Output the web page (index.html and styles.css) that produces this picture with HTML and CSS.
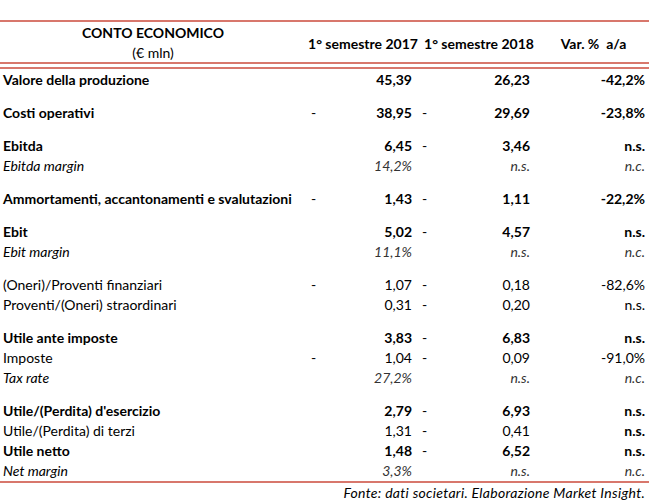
FILE: index.html
```html
<!DOCTYPE html>
<html lang="it">
<head>
<meta charset="utf-8">
<title>Conto economico</title>
<link rel="stylesheet" href="styles.css">
</head>
<body>
<div class="report">
  <div class="head">
    <div class="h-label"><strong>CONTO ECONOMICO</strong><span>(€ mln)</span></div>
    <div class="h-col">1° semestre 2017</div>
    <div class="h-col">1° semestre 2018</div>
    <div class="h-col">Var. %&nbsp; a/a</div>
  </div>
  <div class="body">
    <div class="row b"><div class="lab">Valore della produzione</div><div class="c17"><span></span><span>45,39</span></div><div class="c18"><span></span><span>26,23</span></div><div class="var">-42,2%</div></div>
    <div class="sp"></div>
    <div class="row b"><div class="lab">Costi operativi</div><div class="c17"><span class="d">-</span><span>38,95</span></div><div class="c18"><span class="d">-</span><span>29,69</span></div><div class="var">-23,8%</div></div>
    <div class="sp"></div>
    <div class="row b"><div class="lab">Ebitda</div><div class="c17"><span></span><span>6,45</span></div><div class="c18"><span class="d">-</span><span>3,46</span></div><div class="var">n.s.</div></div>
    <div class="row i"><div class="lab">Ebitda margin</div><div class="c17"><span></span><span>14,2%</span></div><div class="c18"><span></span><span>n.s.</span></div><div class="var">n.c.</div></div>
    <div class="sp"></div>
    <div class="row b"><div class="lab">Ammortamenti, accantonamenti e svalutazioni</div><div class="c17"><span class="d">-</span><span>1,43</span></div><div class="c18"><span class="d">-</span><span>1,11</span></div><div class="var">-22,2%</div></div>
    <div class="sp"></div>
    <div class="row b"><div class="lab">Ebit</div><div class="c17"><span></span><span>5,02</span></div><div class="c18"><span class="d">-</span><span>4,57</span></div><div class="var">n.s.</div></div>
    <div class="row i"><div class="lab">Ebit margin</div><div class="c17"><span></span><span>11,1%</span></div><div class="c18"><span></span><span>n.s.</span></div><div class="var">n.c.</div></div>
    <div class="sp"></div>
    <div class="row"><div class="lab">(Oneri)/Proventi finanziari</div><div class="c17"><span class="d">-</span><span>1,07</span></div><div class="c18"><span class="d">-</span><span>0,18</span></div><div class="var">-82,6%</div></div>
    <div class="row"><div class="lab">Proventi/(Oneri) straordinari</div><div class="c17"><span></span><span>0,31</span></div><div class="c18"><span class="d">-</span><span>0,20</span></div><div class="var">n.s.</div></div>
    <div class="sp"></div>
    <div class="row b"><div class="lab">Utile ante imposte</div><div class="c17"><span></span><span>3,83</span></div><div class="c18"><span class="d">-</span><span>6,83</span></div><div class="var">n.s.</div></div>
    <div class="row"><div class="lab">Imposte</div><div class="c17"><span class="d">-</span><span>1,04</span></div><div class="c18"><span class="d">-</span><span>0,09</span></div><div class="var">-91,0%</div></div>
    <div class="row i"><div class="lab">Tax rate</div><div class="c17"><span></span><span>27,2%</span></div><div class="c18"><span></span><span>n.s.</span></div><div class="var">n.c.</div></div>
    <div class="sp"></div>
    <div class="row b"><div class="lab">Utile/(Perdita) d'esercizio</div><div class="c17"><span></span><span>2,79</span></div><div class="c18"><span class="d">-</span><span>6,93</span></div><div class="var">n.s.</div></div>
    <div class="row"><div class="lab">Utile/(Perdita) di terzi</div><div class="c17"><span></span><span>1,31</span></div><div class="c18"><span class="d">-</span><span>0,41</span></div><div class="var strong">n.s.</div></div>
    <div class="row b"><div class="lab">Utile netto</div><div class="c17"><span></span><span>1,48</span></div><div class="c18"><span class="d">-</span><span>6,52</span></div><div class="var">n.s.</div></div>
    <div class="row i"><div class="lab">Net margin</div><div class="c17"><span></span><span>3,3%</span></div><div class="c18"><span></span><span>n.s.</span></div><div class="var">n.c.</div></div>
  </div>
  <div class="source">Fonte: dati societari. Elaborazione Market Insight.</div>
</div>
</body>
</html>
```

FILE: styles.css
```css
html, body {
  margin: 0;
  padding: 0;
  background: #ffffff;
}
body {
  font-family: Lato, "Open Sans", sans-serif;
  font-size: 14px;
  color: #000000;
}
.report {
  width: 649px;
  padding-top: 20px;
}
.head {
  display: grid;
  grid-template-columns: 306px 114px 118px 1fr;
  height: 40px;
  border-top: 2px solid #d8776c;
  border-bottom: 2px solid #d8776c;
  margin-bottom: 3px;
  line-height: 20px;
}
.h-label {
  display: flex;
  flex-direction: column;
  align-items: center;
  padding-top: 1px;
}
.h-col {
  display: flex;
  align-items: center;
  justify-content: center;
  font-weight: 700;
  padding-top: 2px;
}
.body {
  border-top: 2px solid #d8776c;
  border-bottom: 2px solid #d8776c;
  padding-top: 1px;
}
.row {
  display: grid;
  grid-template-columns: 306px 114px 118px 1fr;
  height: 20px;
  line-height: 20px;
}
.sp {
  height: 13px;
}
.lab {
  padding-left: 3px;
  white-space: nowrap;
}
.c17, .c18 {
  display: flex;
  justify-content: space-between;
}
.c17 {
  padding: 0 8px 0 5px;
}
.c18 {
  padding: 0 8px 0 2px;
}
.d {
  font-weight: 400;
}
.var {
  text-align: right;
  padding-right: 4px;
}
.b {
  font-weight: 700;
}
.i {
  font-style: italic;
}
.i .c17, .i .c18, .i .var {
  color: #333333;
}
.strong {
  font-weight: 700;
}
.source {
  font-style: italic;
  text-align: right;
  padding-right: 4px;
  line-height: 20px;
  letter-spacing: 0.3px;
}
```
